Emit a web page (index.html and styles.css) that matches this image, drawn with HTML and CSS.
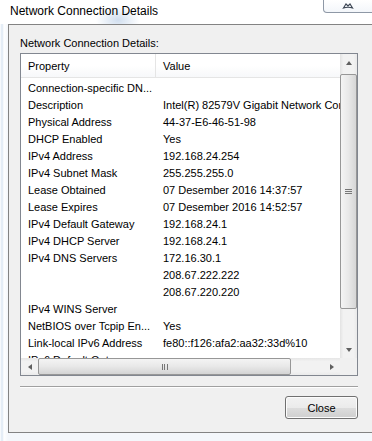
FILE: index.html
```html
<!DOCTYPE html>
<html lang="en">
<head>
    <meta charset="UTF-8">
    <title>Network Connection Details</title>
    <link rel="stylesheet" href="styles.css">
</head>
<body>
    <!-- Window frame -->
    <div class="window">
        <!-- Title bar -->
        <div class="titlebar">
            <span class="title">Network Connection Details</span>
            <div class="caption-btn">
                <svg width="12" height="7" viewBox="0 0 12 7">
                    <path d="M1.5 6 L4 2 L6 4 L8 2 L10.5 6 Q6 4.5 1.5 6 Z" fill="none" stroke="#3d4654" stroke-width="1.1"/>
                </svg>
            </div>
        </div>

        <!-- Dialog body -->
        <div class="dialog">
            <div class="label">Network Connection Details:</div>

            <!-- List view -->
            <div class="listview">
                <div class="lv-main">
                    <div class="lv-content">
                        <div class="lv-header">
                            <div class="col-prop">Property</div>
                            <div class="col-val">Value</div>
                        </div>
                        <div class="lv-rows">
                            <div class="row"><div class="col-prop">Connection-specific DN...</div><div class="col-val"></div></div>
                            <div class="row"><div class="col-prop">Description</div><div class="col-val">Intel(R) 82579V Gigabit Network Connection</div></div>
                            <div class="row"><div class="col-prop">Physical Address</div><div class="col-val">44-37-E6-46-51-98</div></div>
                            <div class="row"><div class="col-prop">DHCP Enabled</div><div class="col-val">Yes</div></div>
                            <div class="row"><div class="col-prop">IPv4 Address</div><div class="col-val">192.168.24.254</div></div>
                            <div class="row"><div class="col-prop">IPv4 Subnet Mask</div><div class="col-val">255.255.255.0</div></div>
                            <div class="row"><div class="col-prop">Lease Obtained</div><div class="col-val">07 Desember 2016 14:37:57</div></div>
                            <div class="row"><div class="col-prop">Lease Expires</div><div class="col-val">07 Desember 2016 14:52:57</div></div>
                            <div class="row"><div class="col-prop">IPv4 Default Gateway</div><div class="col-val">192.168.24.1</div></div>
                            <div class="row"><div class="col-prop">IPv4 DHCP Server</div><div class="col-val">192.168.24.1</div></div>
                            <div class="row"><div class="col-prop">IPv4 DNS Servers</div><div class="col-val">172.16.30.1</div></div>
                            <div class="row"><div class="col-prop"></div><div class="col-val">208.67.222.222</div></div>
                            <div class="row"><div class="col-prop"></div><div class="col-val">208.67.220.220</div></div>
                            <div class="row"><div class="col-prop">IPv4 WINS Server</div><div class="col-val"></div></div>
                            <div class="row"><div class="col-prop">NetBIOS over Tcpip En...</div><div class="col-val">Yes</div></div>
                            <div class="row"><div class="col-prop">Link-local IPv6 Address</div><div class="col-val">fe80::f126:afa2:aa32:33d%10</div></div>
                            <div class="row"><div class="col-prop">IPv6 Default Gateway</div><div class="col-val"></div></div>
                        </div>
                    </div>

                    <!-- Vertical scrollbar -->
                    <div class="vscroll">
                        <div class="sb-arrow"><span class="tri-up"></span></div>
                        <div class="vtrack">
                            <div class="vthumb"><span class="grip-h"></span></div>
                        </div>
                        <div class="sb-arrow"><span class="tri-down"></span></div>
                    </div>
                </div>

                <!-- Horizontal scrollbar -->
                <div class="hscroll">
                    <div class="sb-arrow"><span class="tri-left"></span></div>
                    <div class="htrack">
                        <div class="hthumb"><span class="grip-v"></span></div>
                    </div>
                    <div class="sb-arrow"><span class="tri-right"></span></div>
                    <div class="sb-corner"></div>
                </div>
            </div>

            <div class="separator"></div>

            <div class="buttons">
                <button class="btn">Close</button>
            </div>
        </div>
    </div>
</body>
</html>
```

FILE: styles.css
```css
/* Reset */
* {
    box-sizing: border-box;
    margin: 0;
    padding: 0;
}

body {
    width: 372px;
    height: 441px;
    overflow: hidden;
    background: #f7f9fc;
    font-family: "Liberation Sans", Arial, sans-serif;
    font-size: 11px;
    color: #000;
}

/* Glass window frame */
.window {
    height: 441px;
    padding-left: 8px;
    background:
        linear-gradient(90deg, #ffffff 0, #dce7f3 2px, #ffffff 4px, #f4f7fb 8px);
}

/* Title bar */
.titlebar {
    height: 24px;
    display: flex;
    justify-content: space-between;
    align-items: flex-start;
    margin-left: -8px;
    padding-left: 10px;
    background:
        radial-gradient(ellipse 22px 14px at 118px 20px, rgba(170, 195, 225, 0.55), rgba(255, 255, 255, 0)),
        #ffffff;
}

.title {
    font-size: 12px;
    line-height: 24px;
    margin-top: -1px;
    color: #000;
}

/* Partially visible caption button */
.caption-btn {
    width: 50px;
    height: 13px;
    margin-right: -1px;
    border: 1px solid #8e98a6;
    border-top: none;
    border-bottom-left-radius: 4px;
    background: linear-gradient(#ffffff, #f3f6fa);
    display: flex;
    justify-content: center;
    align-items: flex-end;
    padding-bottom: 3px;
}

/* Dialog body */
.dialog {
    width: 366px;
    height: 409px;
    background: #f0f0f0;
    border: 1px solid #838383;
    padding: 11px 0 0 11px;
}

.label {
    line-height: 14px;
    margin-bottom: 3px;
}

/* List view */
.listview {
    width: 338px;
    height: 323px;
    border: 1px solid #828790;
    background: #ffffff;
    display: flex;
    flex-direction: column;
}

.lv-main {
    height: 304px;
    display: flex;
}

.lv-content {
    flex: 1;
    overflow: hidden;
}

.lv-header {
    height: 24px;
    display: flex;
    align-items: center;
    border-bottom: 1px solid #e5e5e5;
    background: linear-gradient(#ffffff, #ffffff 50%, #f7f8fa);
}

.lv-header .col-prop {
    border-right: 1px solid #e5e5e5;
    height: 100%;
    display: flex;
    align-items: center;
}

.col-prop {
    width: 135px;
    flex: none;
    padding-left: 7px;
    white-space: nowrap;
}

.col-val {
    padding-left: 7px;
    white-space: nowrap;
}

.lv-rows {
    padding-top: 2px;
}

.row {
    height: 17px;
    line-height: 17px;
    display: flex;
}

/* Scrollbars */
.vscroll {
    width: 17px;
    flex: none;
    display: flex;
    flex-direction: column;
    background: linear-gradient(90deg, #e3e3e3, #f2f2f2 20%, #f2f2f2 80%, #e9e9e9);
}

.sb-arrow {
    width: 17px;
    height: 17px;
    flex: none;
    display: flex;
    align-items: center;
    justify-content: center;
}

.vtrack {
    flex: 1;
    padding: 3px 0 32px;
}

.vthumb {
    height: 100%;
    border: 1px solid #979797;
    border-radius: 2px;
    background: linear-gradient(90deg, #f4f4f4, #e8e8e8 50%, #d6d6d6);
    display: flex;
    align-items: center;
    justify-content: center;
}

.grip-h {
    width: 7px;
    height: 5px;
    border-top: 1px solid #777;
    border-bottom: 1px solid #777;
    position: relative;
}

.grip-h::after {
    content: "";
    position: absolute;
    left: 0;
    right: 0;
    top: 1px;
    border-top: 1px solid #777;
}

.hscroll {
    height: 17px;
    flex: none;
    display: flex;
    background: linear-gradient(#e6e6e6, #f2f2f2 20%, #f2f2f2 80%, #eaeaea);
}

.htrack {
    flex: 1;
    padding-right: 32px;
}

.hthumb {
    height: 100%;
    border: 1px solid #979797;
    border-radius: 2px;
    background: linear-gradient(#f4f4f4, #e8e8e8 50%, #d4d4d4);
    display: flex;
    align-items: center;
    justify-content: center;
}

.grip-v {
    width: 6px;
    height: 6px;
    border-left: 1px solid #777;
    border-right: 1px solid #777;
    position: relative;
}

.grip-v::after {
    content: "";
    position: absolute;
    top: 0;
    bottom: 0;
    left: 1.5px;
    border-left: 1px solid #777;
}

.sb-corner {
    width: 17px;
    flex: none;
    background: #f0f0f0;
}

.tri-up, .tri-down, .tri-left, .tri-right {
    width: 0;
    height: 0;
    border: 3px solid transparent;
}

.tri-up {
    border-bottom: 4px solid #606060;
    border-top-width: 0;
}

.tri-down {
    border-top: 4px solid #606060;
    border-bottom-width: 0;
}

.tri-left {
    border-right: 4px solid #606060;
    border-left-width: 0;
}

.tri-right {
    border-left: 4px solid #606060;
    border-right-width: 0;
}

/* Etched separator */
.separator {
    width: 338px;
    margin-top: 10px;
    border-top: 1px solid #a0a0a0;
    border-bottom: 1px solid #ffffff;
}

/* Button row */
.buttons {
    width: 338px;
    display: flex;
    justify-content: flex-end;
    margin-top: 8px;
}

.btn {
    width: 73px;
    height: 23px;
    font-family: "Liberation Sans", Arial, sans-serif;
    font-size: 11px;
    color: #000;
    border: 1px solid #707070;
    border-radius: 3px;
    background: linear-gradient(#f2f2f2, #ebebeb 50%, #dddddd 51%, #cfcfcf);
    box-shadow: inset 0 0 0 1px #fcfcfc;
}
```
